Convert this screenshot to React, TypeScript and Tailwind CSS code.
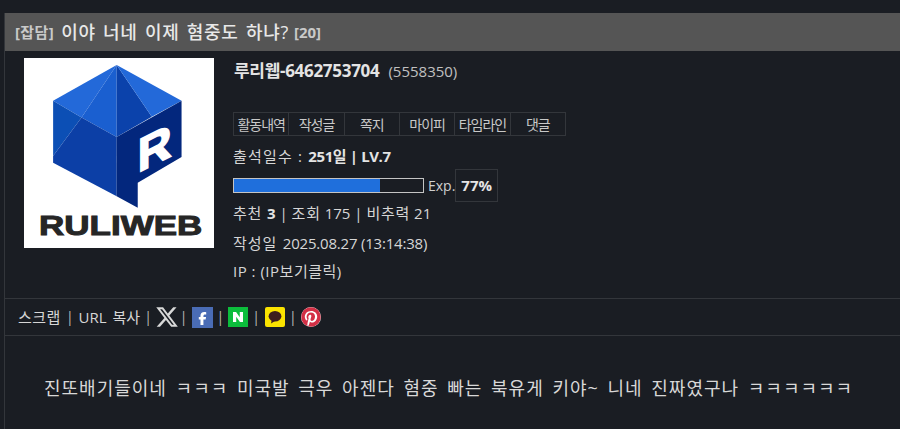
import { FaFacebookF, FaPinterest, FaXTwitter } from "react-icons/fa6";
import { SiNaver } from "react-icons/si";

const menus = ["활동내역", "작성글", "쪽지", "마이피", "타임라인", "댓글"];

const Logo = () => (
  <svg viewBox="43 22 568 568" className="w-[190px] h-[190px] shrink-0 bg-white">
    <polygon points="320,43 130,150 215,200" fill="#2369d9" />
    <polygon points="320,43 215,200 320,258" fill="#1a5fd0" />
    <polygon points="320,43 320,258 425,198" fill="#0b42ab" />
    <polygon points="320,43 425,198 514,150" fill="#2369d9" />
    <polygon points="130,150 215,200 130,315" fill="#0c4fb5" />
    <polygon points="215,200 320,258 320,435 130,335 130,315" fill="#0c3fa6" />
    <polygon points="320,258 514,150 514,318 383,395 383,470 320,435" fill="#03277d" />
    <text
      transform="matrix(1 -0.5 0 1 383 365)"
      fontFamily="'Liberation Sans', sans-serif"
      fontWeight="700"
      fontSize="140"
      fill="#fff"
      stroke="#fff"
      strokeWidth="5"
    >
      R
    </text>
    <text
      x="88"
      y="552"
      textLength="488"
      lengthAdjust="spacingAndGlyphs"
      fontFamily="'Liberation Sans', sans-serif"
      fontWeight="700"
      fontSize="84"
      fill="#262626"
      stroke="#262626"
      strokeWidth="3"
    >
      RULIWEB
    </text>
  </svg>
);

const Bar = () => <span className="text-[#b9b9b9] text-sm mx-[4px]">|</span>;

const App = () => {
  return (
    <div
      className="h-[429px] overflow-hidden bg-[#1a1d23] pt-[13px] pl-[4px] text-[#d6d6d6]"
      style={{ fontFamily: "'Open Sans', 'Noto Sans CJK KR', sans-serif" }}
    >
      <div className="h-[416px] border-l border-[#33363b]">
        <div className="h-[38px] bg-[#555555] flex items-center pl-[10px]">
          <span className="text-[15px] font-bold text-[#c9c9c9] tracking-[0.4px]">[잡담]</span>
          <span className="ml-[7px] text-[18px] font-medium text-[#e8e8e8] tracking-[0.7px] [word-spacing:2px]">이야 너네 이제 혐중도 하냐?</span>
          <span className="ml-[5px] text-[15px] font-bold text-[#c9c9c9]">[20]</span>
        </div>

        <div className="h-[248px] flex pl-[19px] pt-[7px] gap-[19px] border-b border-[#33363b]">
          <Logo />
          <div className="flex flex-col w-[340px]">
            <div className="h-[26px] pl-[1px] flex items-center gap-[9px]">
              <span className="text-[17px] font-bold text-[#e4e4e4] tracking-[-0.3px]">루리웹-6462753704</span>
              <span className="text-[15px] text-[#c0c0c0]">(5558350)</span>
            </div>
            <div className="mt-[28px] w-[333px] h-[24px] flex border border-[#33363b]">
              {menus.map((m) => (
                <div
                  key={m}
                  className="flex-1 flex items-center justify-center text-[14px] tracking-[-1px] text-[#c8c8c8] border-r border-[#33363b] last:border-r-0"
                >
                  {m}
                </div>
              ))}
            </div>
            <div className="mt-[7px] h-[26px] flex items-center text-[15px] whitespace-pre">
              <span className="tracking-[1.2px]">출석일수 : </span>
              <b className="text-[#e4e4e4] tracking-[-0.4px]">251일 | LV.7</b>
            </div>
            <div className="h-[33px] flex items-center">
              <div className="w-[191px] h-[15px] border border-[#c4c4c4] bg-[#1a1d23]">
                <div className="w-[77%] h-full bg-[#1f6fdc]" />
              </div>
              <span className="ml-[4px] text-[14px] text-[#d0d0d0]">Exp.</span>
              <span className="h-full flex items-center px-[5px] border border-[#33363b] text-[15px] font-bold text-[#e4e4e4]">
                77%
              </span>
            </div>
            <div className="-mt-[3px] h-[29px] flex items-center text-[15px] whitespace-pre">
              <span className="tracking-[0.8px]">추천 </span>
              <b className="text-[#e4e4e4]">3</b> | <span className="tracking-[0.8px]">조회</span> 175 | <span className="tracking-[0.8px]">비추력</span> 21
            </div>
            <div className="mt-[1px] h-[29px] flex items-center text-[15px] whitespace-pre">
              <span className="tracking-[0.9px]">작성일</span>
              <span className="ml-[2px] tracking-[-0.2px]"> 2025.08.27 (13:14:38)</span>
            </div>
            <div className="-mt-[1px] h-[29px] flex items-center text-[15px] whitespace-pre tracking-[0.5px]">IP : (IP보기클릭)</div>
          </div>
        </div>

        <div className="h-[37px] flex items-center pl-[13px] border-b border-[#33363b] text-[15px]">
          <span className="tracking-[0.5px]">스크랩</span>
          <span className="text-[#b9b9b9] text-sm mx-[5px]">|</span>
          <span className="[word-spacing:2px]">URL 복사</span>
          <Bar />
          <FaXTwitter className="w-[24px] h-[24px] text-[#d8d8d8] -ml-[1px] -mr-[3px]" />
          <Bar />
          <span className="w-[21px] h-[21px] bg-[#4a6cb5] flex items-center justify-center">
            <FaFacebookF className="w-[13px] h-[13px] text-white mt-[3px]" />
          </span>
          <Bar />
          <span className="w-[20px] h-[20px] bg-[#0cbd3c] flex items-center justify-center">
            <SiNaver className="w-[10px] h-[10px] text-white" />
          </span>
          <Bar />
          <span className="ml-[1px] w-[20px] h-[20px] rounded-[2px] bg-[#fbe300] flex items-center justify-center">
            <svg viewBox="0 0 20 20" className="w-[16px] h-[16px]">
              <ellipse cx="10" cy="9" rx="8" ry="6.5" fill="#3e1d1d" />
              <polygon points="6,13 5,18 10,15" fill="#3e1d1d" />
            </svg>
          </span>
          <Bar />
          <span className="w-[20px] h-[20px] rounded-full bg-white flex items-center justify-center">
            <FaPinterest className="w-[20px] h-[20px] text-[#d32f45]" />
          </span>
        </div>

        <div className="pl-[39px] pt-[39px] text-[18px] tracking-[1px] [word-spacing:3px] text-[#d8d8d8] whitespace-nowrap">
          진또배기들이네 ㅋㅋㅋ 미국발 극우 아젠다 혐중 빠는 북유게 키야~ 니네 진짜였구나 ㅋㅋㅋㅋㅋㅋ
        </div>
      </div>
    </div>
  );
};

export default App;
